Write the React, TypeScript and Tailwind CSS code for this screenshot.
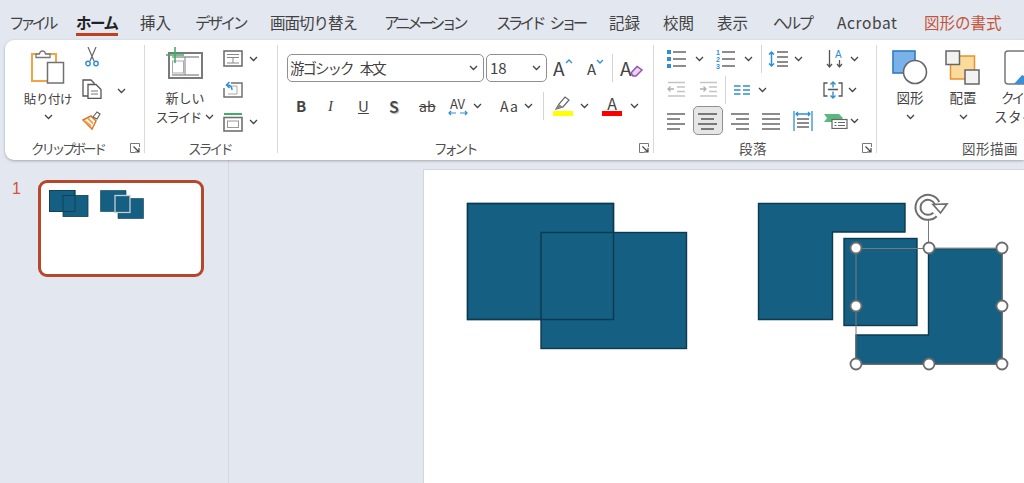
import type { ReactNode } from 'react';

const tabs = [
  { label: 'ファイル', cls: 'ml-[9px] w-[45px] tracking-[-4.2px]' },
  { label: 'ホーム', cls: 'ml-[22px] w-[42px] tracking-[-1.500px] font-bold text-[#222] border-b-[3px] border-[#c03f1d]' },
  { label: '挿入', cls: 'ml-[22px] w-[32px]' },
  { label: 'デザイン', cls: 'ml-[23px] w-[52px] tracking-[-2.800px]' },
  { label: '画面切り替え', cls: 'ml-[23px] w-[88px] tracking-[-1px]' },
  { label: 'アニメーション', cls: 'ml-[26px] w-[82px] tracking-[-3.900px]' },
  { label: 'スライド ショー', cls: 'ml-[30px] w-[86px] tracking-[-3.800px] [word-spacing:7px]' },
  { label: '記録', cls: 'ml-[27px] w-[32px]' },
  { label: '校閲', cls: 'ml-[22px] w-[32px]' },
  { label: '表示', cls: 'ml-[22px] w-[32px]' },
  { label: 'ヘルプ', cls: 'ml-[24px] w-[39px] tracking-[-2.800px]' },
  { label: 'Acrobat', cls: 'ml-[25px] w-[62px] tracking-[0.600px]' },
  { label: '図形の書式', cls: 'ml-[25px] w-[78px] text-[#c4553c]' },
];

type IconProps = { className?: string };

function Chev({ className = '' }: IconProps) {
  return (
    <svg width="9" height="6" viewBox="0 0 9 6" className={`shrink-0 ${className}`}>
      <path d="M1 1l3.500 3.500L8 1" fill="none" stroke="#444" strokeWidth="1.300" />
    </svg>
  );
}

function Launcher() {
  return (
    <svg width="10" height="10" viewBox="0 0 10 10">
      <path d="M9.500 4V.5H.5v9H5" fill="none" stroke="#777" strokeWidth="1" />
      <path d="M3.500 3.500L9 9M9 5v4H5" fill="none" stroke="#444" strokeWidth="1.200" />
    </svg>
  );
}

function Lines({ rows, className = '', color = '#666' }: { rows: number[][]; className?: string; color?: string }) {
  return (
    <svg width="20" height="18" viewBox="0 0 20 18" className={`shrink-0 ${className}`}>
      {rows.map((r, i) => (
        <path key={i} d={`M${r[0]} ${r[1]}H${r[2]}`} stroke={color} strokeWidth="1.400" />
      ))}
    </svg>
  );
}

function Paste() {
  return (
    <svg width="36" height="37" viewBox="0 0 36 37">
      <rect x="2" y="6" width="24" height="27" fill="#fff" stroke="#f2a444" strokeWidth="2" />
      <path d="M6 9.500V6h3.500c.5-4 5.500-4 6 0H20v3.500z" fill="#fff" stroke="#777" strokeWidth="1.300" />
      <rect x="17.500" y="14.500" width="16" height="20.500" fill="#fff" stroke="#707070" strokeWidth="1.500" />
    </svg>
  );
}

function Scissors() {
  return (
    <svg width="14" height="20" viewBox="0 0 14 20">
      <path d="M3 0l6 14M11 0L5 14" fill="none" stroke="#666" strokeWidth="1.200" />
      <circle cx="3" cy="16.500" r="2.200" fill="#fff" stroke="#2e8fd6" strokeWidth="1.400" />
      <circle cx="11" cy="16.500" r="2.200" fill="#fff" stroke="#2e8fd6" strokeWidth="1.400" />
    </svg>
  );
}

function Copy() {
  return (
    <svg width="20" height="20" viewBox="0 0 20 20">
      <path d="M6 17H1V1h8l3 3v2" fill="#fff" stroke="#555" strokeWidth="1.300" />
      <path d="M6 5.500h8l5 5v9H6z" fill="#fff" stroke="#555" strokeWidth="1.300" />
      <path d="M9 12h7M9 15h7" stroke="#777" />
    </svg>
  );
}

function Brush() {
  return (
    <svg width="20" height="19" viewBox="0 0 20 19">
      <path d="M1 9l8-4 5 5-4 8z" fill="#fff" stroke="#e2761b" strokeWidth="1.500" />
      <path d="M3 10l6 5M6 7.500l5 5" stroke="#f0a050" strokeWidth="1.800" />
      <path d="M11 6l4-5 3 2-3 5z" fill="#fff" stroke="#666" strokeWidth="1.200" />
    </svg>
  );
}

function NewSlide() {
  return (
    <svg width="38" height="33" viewBox="0 0 38 33">
      <rect x="3" y="7" width="33" height="25" fill="#fff" stroke="#7a7a7a" strokeWidth="2" />
      <path d="M6 11h27M19 11v18M6 29h27" fill="none" stroke="#999" strokeWidth="1.300" />
      <rect x="6.500" y="15" width="11" height="12" fill="none" stroke="#aaa" />
      <path d="M9 1v16M0 9h18" stroke="#3fae66" strokeWidth="1.600" />
    </svg>
  );
}

function LayoutIcon() {
  return (
    <svg width="20" height="17" viewBox="0 0 20 17">
      <rect x="1" y="1" width="18" height="15" fill="#fff" stroke="#707070" strokeWidth="1.600" />
      <path d="M4 4.500h12M4 7.500h12M10 7.500V13M4 13h12" fill="none" stroke="#888" />
    </svg>
  );
}

function ResetIcon() {
  return (
    <svg width="20" height="17" viewBox="0 0 20 17">
      <path d="M8 2h11v14H1V7" fill="#fff" stroke="#707070" strokeWidth="1.500" />
      <path d="M5 5h9v8H5" fill="none" stroke="#aaa" />
      <path d="M9 9c0-3-2-5-5-5M6.500 1L3.500 4l3 3" fill="none" stroke="#2e8fd6" strokeWidth="1.500" />
    </svg>
  );
}

function SectionIcon() {
  return (
    <svg width="20" height="20" viewBox="0 0 20 20">
      <path d="M1 2h18" stroke="#3fae66" strokeWidth="2" />
      <rect x="1" y="5.500" width="18" height="13.500" fill="#fff" stroke="#707070" strokeWidth="1.600" />
      <rect x="4.500" y="9" width="11" height="6.500" fill="none" stroke="#999" />
    </svg>
  );
}

function Bullets({ className = '' }: IconProps) {
  return (
    <svg width="20" height="18" viewBox="0 0 20 18" className={`shrink-0 ${className}`}>
      {[2, 9, 16].map((y) => (
        <g key={y}>
          <rect x="0" y={y - 2} width="4" height="4" fill="#2e8fd6" />
          <path d={`M6 ${y}H19`} stroke="#666" strokeWidth="1.400" />
        </g>
      ))}
    </svg>
  );
}

function Numbering({ className = '' }: IconProps) {
  return (
    <svg width="20" height="20" viewBox="0 0 20 20" className={`shrink-0 ${className}`}>
      {[3, 10, 17].map((y, i) => (
        <g key={y}>
          <text x="0" y={y + 2.500} fontSize="7" fontWeight="700" fill="#2e8fd6" fontFamily="Liberation Sans">{i + 1}</text>
          <path d={`M6 ${y}H19`} stroke="#666" strokeWidth="1.400" />
        </g>
      ))}
    </svg>
  );
}

function LineSpacing({ className = '' }: IconProps) {
  return (
    <svg width="21" height="18" viewBox="0 0 21 18" className={`shrink-0 ${className}`}>
      <path d="M3.500 2v14M1 4.500L3.500 2 6 4.500M1 13.500L3.500 16 6 13.500" fill="none" stroke="#2e8fd6" strokeWidth="1.500" />
      {[2, 7, 12, 16].map((y) => (
        <path key={y} d={`M9 ${y}H20`} stroke="#666" strokeWidth="1.300" />
      ))}
    </svg>
  );
}

function TextDir({ className = '' }: IconProps) {
  return (
    <svg width="20" height="20" viewBox="0 0 20 20" className={`shrink-0 ${className}`}>
      <path d="M3.500 1v17M1 15l2.500 3L6 15M13.500 11v7M11 15l2.500 3 2.500-3" fill="none" stroke="#555" strokeWidth="1.300" />
      <text x="9" y="9" fontSize="10" fill="#2e8fd6" fontFamily="Liberation Sans">A</text>
    </svg>
  );
}

function AlignText({ className = '' }: IconProps) {
  return (
    <svg width="20" height="18" viewBox="0 0 20 18" className={`shrink-0 ${className}`}>
      <path d="M4.500 2H1v13h3.500M15.500 2H19v13h-3.500M5 8.500h10" fill="none" stroke="#555" strokeWidth="1.300" />
      <path d="M10 1v5.500M7.500 3.500L10 1l2.500 2.500M10 10.500V17M7.500 14.500L10 17l2.500-2.500" fill="none" stroke="#2e8fd6" strokeWidth="1.400" />
    </svg>
  );
}

function Indent({ right = false, className = '' }: { right?: boolean; className?: string }) {
  return (
    <svg width="19" height="17" viewBox="0 0 19 17" className={`shrink-0 ${className}`}>
      <path d="M1 1.500h17M10 6h8M10 10.500h8M1 15h17" stroke="#c4c4c4" strokeWidth="1.300" />
      <path d={right ? 'M1 8h6M4.500 5.500L7 8l-2.500 2.500' : 'M7 8H1M3.500 5.500L1 8l2.500 2.500'} fill="none" stroke="#b0b0b0" strokeWidth="1.300" />
    </svg>
  );
}

function Columns({ className = '' }: IconProps) {
  return (
    <svg width="16" height="12" viewBox="0 0 16 12" className={`shrink-0 ${className}`}>
      <path d="M0 2h6.500M9 2h7M0 6h6.500M9 6h7M0 10h6.500M9 10h7" stroke="#2e8fd6" strokeWidth="1.500" />
    </svg>
  );
}

function Distribute({ className = '' }: IconProps) {
  return (
    <svg width="20" height="20" viewBox="0 0 20 20" className={`shrink-0 ${className}`}>
      <path d="M1 0v20M19 0v20M3 3h14M5 1L3 3l2 2M15 1l2 2-2 2" fill="none" stroke="#2e8fd6" strokeWidth="1.300" />
      <path d="M4 8h12M4 12h12M4 16h12" stroke="#666" strokeWidth="1.300" />
    </svg>
  );
}

function SmartArt({ className = '' }: IconProps) {
  return (
    <svg width="24" height="16" viewBox="0 0 24 16" className={`shrink-0 ${className}`}>
      <path d="M0 1h15l4 4-4 4H0l3-4z" fill="#5cb97e" />
      <rect x="8" y="6.500" width="15" height="9" fill="#fff" stroke="#666" strokeWidth="1.200" />
      <path d="M10.500 9.500h2M14 9.500h7M10.500 12.500h2M14 12.500h7" stroke="#666" />
    </svg>
  );
}

function ShapesIcon() {
  return (
    <svg width="36" height="35" viewBox="0 0 36 35">
      <rect x="1" y="1" width="22" height="22" fill="#79b2ea" stroke="#2e7cc0" strokeWidth="1.600" />
      <circle cx="23" cy="22" r="11.500" fill="#fff" stroke="#666" strokeWidth="1.600" />
    </svg>
  );
}

function ArrangeIcon() {
  return (
    <svg width="36" height="35" viewBox="0 0 36 35">
      <rect x="5.500" y="6" width="24" height="23" fill="#fbdb9c" stroke="#e8912d" strokeWidth="1.500" />
      <rect x="1" y="1" width="13.500" height="13.500" fill="#f2f2f2" stroke="#666" strokeWidth="1.500" />
      <rect x="20" y="20" width="14" height="14" fill="#f2f2f2" stroke="#666" strokeWidth="1.500" />
    </svg>
  );
}

function QuickStyle() {
  return (
    <svg width="36" height="35" viewBox="0 0 36 35">
      <rect x="1" y="1" width="34" height="33" rx="3" fill="#fff" stroke="#777" strokeWidth="1.500" />
      <path d="M10 34l8-9 17 9z" fill="#3b8fd6" />
    </svg>
  );
}

function Sep({ className = '' }: IconProps) {
  return <div className={`w-px bg-[#d4d4d4] shrink-0 ${className}`} />;
}

function Group({ width, label, labelPad, launcher, children }: {
  width: string; label: string; labelPad: string; launcher?: boolean; children: ReactNode;
}) {
  return (
    <div className={`${width} shrink-0 h-full flex`}>
      <div className="flex-1 min-w-0 flex flex-col">
        <div className="h-[97px]">{children}</div>
        <div className="flex items-center h-[16px]">
          <span className={`${labelPad} text-[13.500px] leading-[16px] text-[#505050] whitespace-nowrap`}>{label}</span>
          {launcher && <span className="ml-auto mr-[4px] flex"><Launcher /></span>}
        </div>
      </div>
    </div>
  );
}

const divider = <div className="w-px h-[108px] mt-[2px] bg-[#d9d9d9] shrink-0" />;

function FontGroup() {
  return (
    <div className="flex flex-col pl-[9px]">
      <div className="flex items-center h-[28px] mt-[11px]">
        <div className="w-[197px] h-[28px] border border-[#8f8f8f] rounded-[5px] flex items-center pl-[2px] pr-[5px]">
          <span className="text-[14.500px] text-[#424242] tracking-[-2px] [word-spacing:6px] whitespace-nowrap">游ゴシック 本文</span>
          <Chev className="ml-auto" />
        </div>
        <div className="ml-[2px] w-[61px] h-[28px] border border-[#8f8f8f] rounded-[5px] flex items-center pl-[3px] pr-[5px]">
          <span className="text-[15px] text-[#424242]">18</span>
          <Chev className="ml-auto" />
        </div>
        <div className="ml-[6px] w-[22px] flex items-start text-[#444]">
          <span className="text-[19px] leading-[24px]">A</span>
          <svg width="8" height="5" viewBox="0 0 8 5" className="mt-[3px] shrink-0"><path d="M1 4l3-3 3 3" fill="none" stroke="#2e8fd6" strokeWidth="1.300" /></svg>
        </div>
        <div className="ml-[12px] w-[20px] flex items-start text-[#444]">
          <span className="text-[15px] leading-[24px] mt-[1px]">A</span>
          <svg width="8" height="5" viewBox="0 0 8 5" className="mt-[3px] shrink-0"><path d="M1 1l3 3 3-3" fill="none" stroke="#2e8fd6" strokeWidth="1.300" /></svg>
        </div>
        <Sep className="ml-[5px] h-[28px]" />
        <div className="ml-[7px] w-[22px] flex items-center">
          <span className="text-[19px] leading-[24px] text-[#444]">A</span>
          <svg width="13" height="12" viewBox="0 0 13 12" className="-ml-[2px] mt-[6px] shrink-0">
            <path d="M1 8l6-6.500L12 5l-6 6H3z" fill="#e8d5f2" stroke="#9a4fb5" strokeWidth="1.500" />
          </svg>
        </div>
      </div>
      <div className="flex items-center h-[30px] mt-[9px] text-[#444]">
        <span className="ml-[9px] w-[13px] text-[15px] font-bold">B</span>
        <span className="ml-[19px] w-[12px] text-[15px] italic font-['Liberation_Serif',serif]">I</span>
        <span className="ml-[18px] w-[14px] text-[15px] underline">U</span>
        <span className="ml-[17px] w-[14px] text-[16px] font-medium [text-shadow:1px_1px_1px_#aaa]">S</span>
        <span className="ml-[16px] w-[20px] text-[14px] line-through">ab</span>
        <div className="ml-[8px] w-[21px] flex flex-col items-center">
          <span className="text-[13px] leading-[13px]">AV</span>
          <svg width="20" height="6" viewBox="0 0 20 6"><path d="M1 3h7M3 1L1 3l2 2M12 3h7M17 1l2 2-2 2" fill="none" stroke="#2e8fd6" strokeWidth="1.200" /></svg>
        </div>
        <Chev className="ml-[5px]" />
        <span className="ml-[18px] w-[22px] text-[14px] tracking-[1px]">Aa</span>
        <Chev className="ml-[2px]" />
        <Sep className="ml-[10px] h-[28px]" />
        <div className="ml-[9px] w-[20px] flex flex-col items-center">
          <svg width="18" height="15" viewBox="0 0 18 15"><path d="M2 13l3-5 6-7 4 3-6 7z" fill="#fff" stroke="#666" strokeWidth="1.200" /><path d="M2 13l3-5 4 3z" fill="#888" /></svg>
          <div className="w-[20px] h-[5px] bg-[#ffff00]" />
        </div>
        <Chev className="ml-[7px]" />
        <div className="ml-[13px] w-[20px] flex flex-col items-center">
          <span className="text-[16px] leading-[15px]">A</span>
          <div className="w-[20px] h-[5px] bg-[#ff0000]" />
        </div>
        <Chev className="ml-[8px]" />
      </div>
    </div>
  );
}

function ParagraphGroup() {
  const row = 'flex items-center h-[31px]';
  return (
    <div className="flex flex-col">
      <div className={row}>
        <Bullets className="ml-[13px]" />
        <Chev className="ml-[8px]" />
        <Numbering className="ml-[12px]" />
        <Chev className="ml-[8px]" />
        <Sep className="ml-[8px] h-[28px]" />
        <LineSpacing className="ml-[6px]" />
        <Chev className="ml-[5px]" />
        <TextDir className="ml-[23px]" />
        <Chev className="ml-[4px]" />
      </div>
      <div className={row}>
        <Indent className="ml-[13px]" />
        <Indent right className="ml-[13px]" />
        <Sep className="ml-[7px] h-[28px]" />
        <Columns className="ml-[8px]" />
        <Chev className="ml-[8px]" />
        <AlignText className="ml-[56px]" />
        <Chev className="ml-[5px]" />
      </div>
      <div className={row}>
        <Lines className="ml-[13px]" rows={[[0, 2, 18], [0, 7, 13], [0, 12, 18], [0, 17, 13]]} />
        <div className="ml-[6px] w-[30px] h-[29px] rounded-[5px] bg-[#e6e6e6] border border-[#8f8f8f] flex items-center justify-center shrink-0">
          <Lines rows={[[0, 2, 19], [3, 7, 16], [0, 12, 19], [3, 17, 16]]} color="#555" />
        </div>
        <Lines className="ml-[7px]" rows={[[1, 2, 19], [6, 7, 19], [1, 12, 19], [6, 17, 19]]} />
        <Lines className="ml-[11px]" rows={[[1, 2, 19], [1, 7, 19], [1, 12, 19], [1, 17, 19]]} />
        <Distribute className="ml-[12px]" />
        <SmartArt className="ml-[11px]" />
        <Chev className="ml-[2px]" />
      </div>
    </div>
  );
}

function RotateHandle() {
  // double ring open on the right, with the arrow head sitting on the gap
  const arc = 'M935 214.500A10 10 0 1 1 937 203';
  return (
    <g>
      <path d={arc} fill="none" stroke="#6e6e6e" strokeWidth="7" />
      <path d={arc} fill="none" stroke="#fff" strokeWidth="3" />
      <path d="M933 204.500l14-.5-6.500 9z" fill="#fff" stroke="#6e6e6e" strokeWidth="1.700" />
    </g>
  );
}

function Slide() {
  const fill = '#156082';
  const line = '#0c3a4f';
  const handles = [[856, 248], [929, 248], [1002, 248], [856, 306], [1002, 306], [856, 364], [929, 364], [1002, 364]];
  return (
    <svg viewBox="424 170 600 313" className="w-[600px] h-[313px] block">
      <rect x="467.500" y="203.500" width="146" height="116" fill={fill} stroke={line} strokeWidth="1.400" />
      <rect x="541" y="232.500" width="145.500" height="116" fill={fill} stroke={line} strokeWidth="1.400" />
      <rect x="467.500" y="203.500" width="146" height="116" fill="none" stroke={line} strokeWidth="1.400" />
      <path d="M758.500 203.500H905V232H832.500V319.500H758.500z" fill={fill} stroke={line} strokeWidth="1.400" />
      <rect x="844" y="238.500" width="73" height="87" fill={fill} stroke={line} strokeWidth="1.400" />
      <path d="M928.500 248.500H1002V364H856V335H928.500z" fill={fill} stroke={line} strokeWidth="1.400" />
      <path d="M856 248.500H1002V364H856zM928.500 218V248" fill="none" stroke="#7a7a7a" strokeWidth="1" />
      <RotateHandle />
      {handles.map(([x, y]) => (
        <circle key={`${x}-${y}`} cx={x} cy={y} r="5.500" fill="#fff" stroke="#6b6b6b" strokeWidth="1.800" />
      ))}
    </svg>
  );
}

function Thumb() {
  const fill = '#156082';
  return (
    <svg viewBox="41 183 160 91" className="w-full h-full block">
      <rect x="49.500" y="190.500" width="25.500" height="21" fill={fill} stroke="#0f3d52" strokeWidth="0.800" />
      <rect x="63" y="195.500" width="25" height="21" fill={fill} stroke="#0f3d52" strokeWidth="0.800" />
      <rect x="49.500" y="190.500" width="25.500" height="21" fill="none" stroke="#0f3d52" strokeWidth="0.800" />
      <path d="M100.500 190.500H126V196H115V211.500H100.500z" fill={fill} stroke="#0f3d52" strokeWidth="0.600" />
      <path d="M130 198.500H143.500V218.500H118V213H130z" fill={fill} stroke="#0f3d52" strokeWidth="0.600" />
      <rect x="115" y="195.500" width="15" height="17" fill={fill} stroke="#c9ced4" strokeWidth="1.300" />
    </svg>
  );
}

export default function App() {
  return (
    <div className="w-[1024px] h-[483px] overflow-hidden bg-[#e3e7ef] flex flex-col font-['Noto_Sans_CJK_JP','Noto_Sans',sans-serif] text-[#424242]">
      <div className="h-[40px] shrink-0 flex items-start pt-[11px] text-[15.500px] leading-[22px] whitespace-nowrap">
        {tabs.map((t) => (
          <span key={t.label} className={`${t.cls} shrink-0`}>{t.label}</span>
        ))}
      </div>

      <div className="ml-[5px] h-[120px] shrink-0 bg-white rounded-l-[9px] shadow-[0_1px_3px_rgba(0,0,0,0.28)] flex items-start pt-[3px] z-10 overflow-hidden">
        <Group width="w-[139px]" label="クリップボード" labelPad="pl-[26px] tracking-[-3.100px]" launcher>
          <div className="flex h-full">
            <div className="w-[76px] flex flex-col items-center pl-[10px] pt-[5px] text-[#424242]">
              <Paste />
              <span className="text-[12.500px] leading-[16px] mt-[6px] tracking-[-0.4px] whitespace-nowrap">貼り付け</span>
              <Chev className="mt-[7px]" />
            </div>
            <div className="flex flex-col items-center w-[22px] pt-[4px]">
              <Scissors />
              <div className="mt-[12px]"><Copy /></div>
              <div className="mt-[12px]"><Brush /></div>
            </div>
            <Chev className="ml-[14px] mt-[45px]" />
          </div>
        </Group>
        {divider}
        <Group width="w-[132px]" label="スライド" labelPad="pl-[43px] tracking-[-2.800px]">
          <div className="flex h-full">
            <div className="w-[72px] flex flex-col items-center pt-[3px] pl-[8px]">
              <NewSlide />
              <span className="text-[13px] leading-[17px] mt-[10px]">新しい</span>
              <div className="flex items-center mt-[2px]">
                <span className="text-[13px] leading-[17px] tracking-[-1.800px] whitespace-nowrap">スライド</span>
                <Chev className="ml-[5px]" />
              </div>
            </div>
            <div className="flex flex-col pt-[7px] pl-[6px]">
              <div className="flex items-center h-[17px]"><LayoutIcon /><Chev className="ml-[6px]" /></div>
              <div className="flex items-center h-[17px] mt-[14px]"><ResetIcon /></div>
              <div className="flex items-center h-[20px] mt-[14px]"><SectionIcon /><Chev className="ml-[6px]" /></div>
            </div>
          </div>
        </Group>
        {divider}
        <Group width="w-[375px]" label="フォント" labelPad="pl-[156px] tracking-[-3.200px]" launcher>
          <FontGroup />
        </Group>
        {divider}
        <Group width="w-[222px]" label="段落" labelPad="pl-[85px] tracking-[0.500px]" launcher>
          <ParagraphGroup />
        </Group>
        {divider}
        <Group width="w-[147px]" label="図形描画" labelPad="pl-[85px] tracking-[0.500px]">
          <div className="flex pt-[7px] text-[13.500px]">
            <div className="ml-[15px] w-[38px] flex flex-col items-center">
              <ShapesIcon />
              <span className="leading-[17px] mt-[4px]">図形</span>
              <Chev className="mt-[8px]" />
            </div>
            <div className="ml-[17px] w-[38px] flex flex-col items-center">
              <ArrangeIcon />
              <span className="leading-[17px] mt-[4px]">配置</span>
              <Chev className="mt-[8px]" />
            </div>
            <div className="ml-[11px] w-[60px] shrink-0 flex flex-col items-center whitespace-nowrap">
              <QuickStyle />
              <span className="leading-[17px] mt-[4px] tracking-[-3px]">クイック</span>
              <span className="leading-[17px] mt-[2px] tracking-[0.500px]">スタイル</span>
            </div>
          </div>
        </Group>
      </div>

      <div className="flex-1 min-h-0 flex">
        <div className="w-[229px] shrink-0 border-r border-[#d3d6de] flex items-start pt-[20px]">
          <span className="ml-[12px] w-[26px] text-[16px] leading-[18px] text-[#cf5539] font-['Liberation_Sans',sans-serif]">1</span>
          <div className="w-[166px] h-[97px] bg-white border-[3px] border-[#b7472a] rounded-[9px] overflow-hidden">
            <Thumb />
          </div>
        </div>
        <div className="flex-1 min-w-0 pl-[195px] pt-[10px]">
          <div className="w-[600px] h-[313px] bg-white shadow-[0_0_0_1px_#d3d6de]">
            <Slide />
          </div>
        </div>
      </div>
    </div>
  );
}
